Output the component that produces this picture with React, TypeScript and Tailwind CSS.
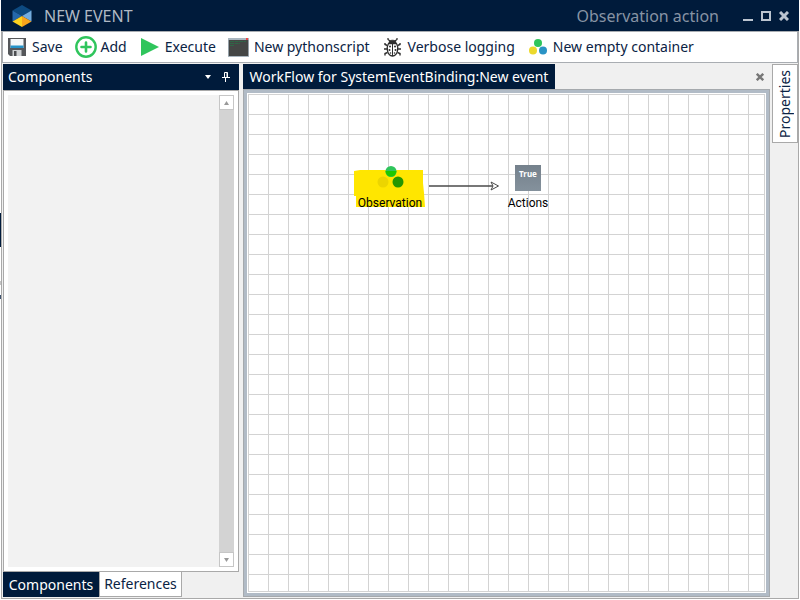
import type { ReactNode } from 'react';

function LogoIcon() {
  return (
    <svg className="h-[22px] w-5 shrink-0" viewBox="0 0 20 22">
      <path d="M10 0 19.500 5.500 10 11 .5 5.500z" fill="#0d4a80" />
      <path d="M.5 5.500 10 11 .5 16.500z" fill="#2568ab" />
      <path d="M19.500 5.500 10 11l9.500 5.500z" fill="#74addf" />
      <path d="M.5 16.500 10 11v11z" fill="#fdd21f" />
      <path d="M19.500 16.500 10 11v11z" fill="#f9a51b" />
    </svg>
  );
}

function SaveIcon() {
  return (
    <svg width="18" height="18" viewBox="0 0 18 18">
      <path d="M0 0h18v18H2l-2-2z" fill="#55575a" />
      <path d="M2.500 1h13v9h-13z" fill="#f4f7f9" />
      <path d="M2.500 7.500h13V10h-13z" fill="#2492c8" />
      <path d="M4.500 12h9v6h-9z" fill="#cfd2d4" />
      <path d="M6 13h2.500v5H6z" fill="#4b4d50" />
    </svg>
  );
}

function AddIcon() {
  return (
    <svg width="22" height="22" viewBox="0 0 22 22" fill="none" stroke="#2fc55c">
      <circle cx="11" cy="11" r="9.700" strokeWidth="2.400" />
      <path d="M11 6.500v9M6.500 11h9" strokeWidth="2.600" strokeLinecap="round" />
    </svg>
  );
}

function PlayIcon() {
  return (
    <svg width="18" height="18" viewBox="0 0 18 18">
      <path d="M0 0v18l18-9z" fill="#2fc55c" />
    </svg>
  );
}

function TerminalIcon() {
  return (
    <svg width="21" height="19" viewBox="0 0 21 19">
      <path d="M0 0h21v19H0z" fill="#a9b6c0" />
      <path d="M.8 2h19.400v16H.8z" fill="#444645" />
      <path d="M18 .3h2v1.500h-2z" fill="#f22" />
      <path d="M2 3.500h16M2 5.500h10M2 7.500h4" stroke="#2b6e48" strokeDasharray="4 .6" opacity=".8" />
    </svg>
  );
}

function BugIcon() {
  return (
    <svg width="17" height="19" viewBox="0 0 17 19" fill="none" stroke="#2e2e2e">
      <path d="M4 0v1.500l2 1.500M13 0v1.500L11 3" strokeWidth="1.200" />
      <path d="M5 4.500C5 1.500 12 1.500 12 4.500z" fill="#2e2e2e" />
      <path d="M3.500 7.500 1 6.500V5M3 11H0M3.500 14.500 1 15.500V17.500M13.500 7.500 16 6.500V5M14 11h3M13.500 14.500l2.500 1V17.500" strokeWidth="1.400" />
      <path d="M4.500 5.500h8c2.200 3.500 1.800 12-4 12.500-5.800-.5-6.200-9-4-12.500z" fill="#fff" strokeWidth="1.300" />
      <path d="M8.500 6v12" strokeWidth="1" />
      <g fill="#2e2e2e" stroke="none">
        <circle cx="6" cy="8.500" r="1" />
        <circle cx="11" cy="8.500" r="1" />
        <circle cx="5.500" cy="12" r="1" />
        <circle cx="11.500" cy="12" r="1" />
        <circle cx="6.500" cy="15" r=".8" />
        <circle cx="10.500" cy="15" r=".8" />
      </g>
    </svg>
  );
}

function ContainerIcon() {
  return (
    <svg width="18" height="16" viewBox="0 0 18 16">
      <circle cx="9" cy="4" r="4" fill="#2fc55c" />
      <circle cx="4" cy="11.500" r="4" fill="#ecd92c" />
      <circle cx="14" cy="11.500" r="4" fill="#2a93c5" />
    </svg>
  );
}

function CloseIcon({ className }: { className: string }) {
  return (
    <svg className={className} viewBox="0 0 8 8" stroke="currentColor" strokeWidth="2.400">
      <path d="M.8.8l6.400 6.400M7.200.8.8 7.200" />
    </svg>
  );
}

function ToolButton({ icon, children }: { icon: ReactNode; children: ReactNode }) {
  return (
    <button className="flex items-center gap-1 whitespace-nowrap">
      <span className="flex w-[22px] shrink-0 justify-center">{icon}</span>
      {children}
    </button>
  );
}

function TitleBar() {
  return (
    <header className="flex h-[31px] shrink-0 items-center bg-[#001b3b] pr-[10px] pl-[11px] text-base text-[#8793a4]">
      <LogoIcon />
      <h1 className="ml-3 text-[#b0b9c4]">NEW EVENT</h1>
      <span className="ml-auto">Observation action</span>
      <div className="ml-6 flex items-center gap-2 text-[#bcc5d0]">
        <button aria-label="Minimize" className="flex h-[10px] w-[10px] items-end">
          <span className="h-0.5 w-full bg-current" />
        </button>
        <button aria-label="Maximize" className="h-[10px] w-[10px] border-2 border-current" />
        <button aria-label="Close">
          <CloseIcon className="size-[10px]" />
        </button>
      </div>
    </header>
  );
}

function Toolbar() {
  return (
    <div className="flex h-8 shrink-0 items-center gap-3 border border-[#a9adb2] bg-white pl-[3px]">
      <ToolButton icon={<SaveIcon />}>Save</ToolButton>
      <ToolButton icon={<AddIcon />}>Add</ToolButton>
      <ToolButton icon={<PlayIcon />}>Execute</ToolButton>
      <ToolButton icon={<TerminalIcon />}>New pythonscript</ToolButton>
      <ToolButton icon={<BugIcon />}>Verbose logging</ToolButton>
      <ToolButton icon={<ContainerIcon />}>New empty container</ToolButton>
    </div>
  );
}

function ScrollArrow({ label, path }: { label: string; path: string }) {
  return (
    <button aria-label={label} className="flex h-[15px] items-center justify-center border border-[#c6c6c6] bg-white">
      <svg width="5" height="4" viewBox="0 0 5 4">
        <path d={path} fill="#999" />
      </svg>
    </button>
  );
}

function ComponentsPanel() {
  return (
    <aside className="flex w-[236px] shrink-0 flex-col">
      <div className="flex h-[26px] shrink-0 items-center bg-[#001b3b] pr-[9px] pl-[5px] text-white">
        <h2>Components</h2>
        <button aria-label="Panel menu" className="ml-auto">
          <svg width="6" height="4" viewBox="0 0 6 4">
            <path d="M0 0h6L3 4z" fill="currentColor" />
          </svg>
        </button>
        <button aria-label="Pin panel" className="ml-[11px]">
          <svg width="8" height="10" viewBox="0 0 8 10" fill="none" stroke="currentColor">
            <path d="M2.500 5V.5h3V5M5 .5V5M0 5.500h8M3.500 6v4" />
          </svg>
        </button>
      </div>
      <div className="flex grow border border-[#a9a9a9] bg-white p-1">
        <div className="grow bg-[#f2f2f2]" />
        <div className="flex w-[15px] flex-col bg-[#d3d3d3]">
          <ScrollArrow label="Scroll up" path="M0 4h5L2.500 0z" />
          <div className="grow" />
          <ScrollArrow label="Scroll down" path="M0 0h5L2.500 4z" />
        </div>
      </div>
      <div role="tablist" className="flex h-[25px] shrink-0">
        <button role="tab" aria-selected="true" className="w-24 bg-[#001b3b] text-white">
          Components
        </button>
        <button role="tab" aria-selected="false" className="w-[83px] border border-t-0 border-[#a9a9a9] bg-white">
          References
        </button>
      </div>
    </aside>
  );
}

function Canvas() {
  return (
    <div className="relative grow border-r border-b border-[#d3d3d3] bg-white bg-[linear-gradient(to_right,#d3d3d3_1px,transparent_1px),linear-gradient(to_bottom,#d3d3d3_1px,transparent_1px)] bg-size-[20px_20px] font-[Roboto,sans-serif] text-xs text-black">
      <div className="absolute top-[71px] left-[105px] h-[46px] w-[74px]">
        <svg className="absolute inset-0" width="72" height="44" viewBox="0 0 72 44">
          <path d="M1 6l6-1h63v13l1 10 1 14H3V31H1z" fill="#ffe600" />
          <circle cx="38" cy="6.500" r="5.500" fill="#2fc55c" />
          <path d="M32.500 6h11a5.500 5.500 0 0 1-11 0z" fill="#1ec800" />
          <circle cx="30" cy="17" r="5.500" fill="#ecd500" />
          <circle cx="45" cy="17" r="5.500" fill="#259600" />
        </svg>
        <span className="absolute inset-x-0 bottom-0 flex h-4 items-center justify-center">Observation</span>
      </div>
      <svg className="absolute top-[87px] left-[181px]" width="70" height="10" viewBox="0 0 70 10" fill="none" stroke="#4a4a4a">
        <path d="M0 5h67" strokeWidth="1.300" />
        <path d="M62 1 69.500 5 62 9l2-4z" fill="#fff" />
      </svg>
      <div className="absolute top-[71px] left-[260px] flex h-[46px] w-10 flex-col items-center justify-between">
        <div className="h-[26px] w-[26px] bg-linear-to-b from-[#75818c] to-[#84919c] pt-1 text-center font-['Noto_Sans',sans-serif] text-[8px] leading-[10px] font-bold text-white">
          True
        </div>
        <span className="flex h-4 items-center">Actions</span>
      </div>
    </div>
  );
}

function Workspace() {
  return (
    <main className="flex min-w-0 grow flex-col">
      <div role="tablist" className="flex h-[25px] shrink-0 items-center pr-1.5">
        <button role="tab" aria-selected="true" className="h-full w-[312px] whitespace-nowrap bg-[#001b3b] text-white">
          WorkFlow for SystemEventBinding:New event
        </button>
        <button aria-label="Close tab" className="ml-auto text-[#777]">
          <CloseIcon className="size-2" />
        </button>
      </div>
      <div className="flex grow border border-[#a5a9ad] bg-[#b1bbc6] p-[3px]">
        <div className="flex grow border border-white">
          <Canvas />
        </div>
      </div>
    </main>
  );
}

export default function App() {
  return (
    <div className="flex h-screen bg-white pr-px pb-px font-['Noto_Sans',sans-serif] text-sm text-[#0a2344]">
      {/* sliver of the window behind */}
      <div className="w-px shrink-0 pt-[213px]">
        <div className="h-[34px] bg-[#001b3b]" />
        <div className="mt-[34px] h-1 bg-[#c4c4c4]" />
        <div className="mt-2.5 h-1 bg-[#40536e]" />
      </div>
      <div className="flex min-w-0 grow flex-col">
        <TitleBar />
        <div className="flex min-h-0 grow flex-col border-x border-b border-[#a9a9a9] bg-[#f0f0f0]">
          <Toolbar />
          <div className="flex min-h-0 grow py-px pl-px">
            <ComponentsPanel />
            <div className="w-1 shrink-0" />
            <Workspace />
            <nav className="w-7 shrink-0 pl-0.5">
              <button className="flex h-[79px] w-[26px] items-center justify-center border border-[#a9a9a9] bg-white">
                <span className="rotate-180 [writing-mode:vertical-rl]">Properties</span>
              </button>
            </nav>
          </div>
        </div>
      </div>
    </div>
  );
}
